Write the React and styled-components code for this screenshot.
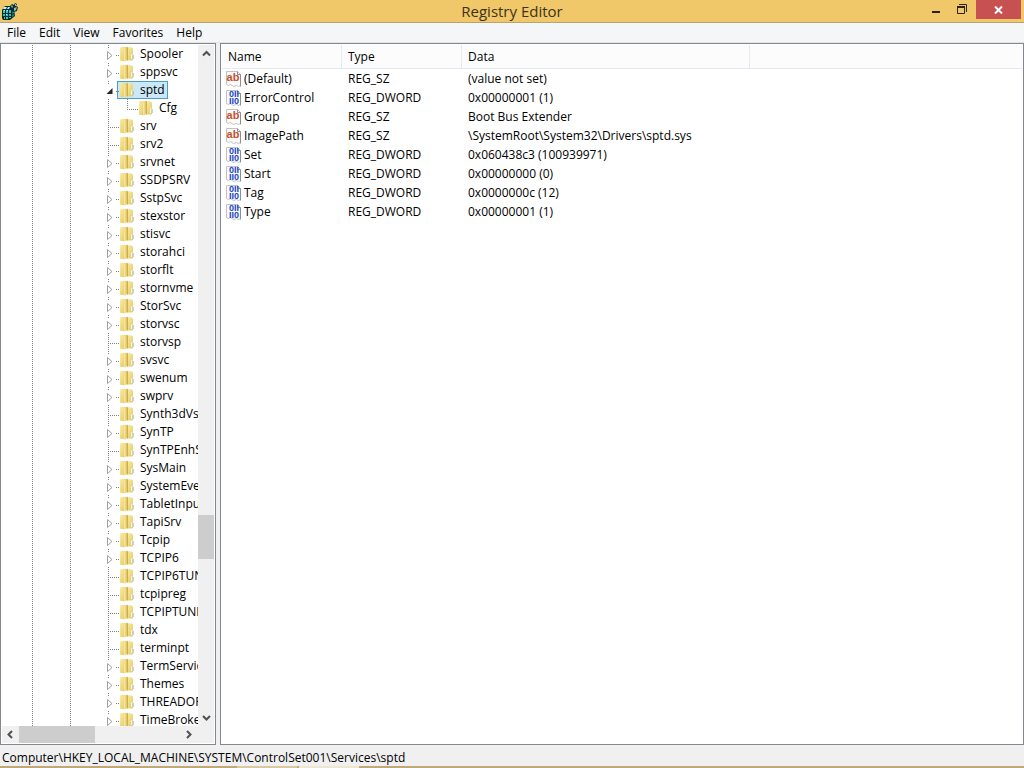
import { useState } from "react";
import styled, { createGlobalStyle, css } from "styled-components";

const MENUS = ["File", "Edit", "View", "Favorites", "Help"];

// kind: "closed" and "open" keys have children, "leaf" keys have none
const KEYS = [
  { name: "Spooler", kind: "closed" },
  { name: "sppsvc", kind: "closed" },
  { name: "sptd", kind: "open" },
  { name: "Cfg", kind: "last", nested: true },
  { name: "srv", kind: "leaf" },
  { name: "srv2", kind: "leaf" },
  { name: "srvnet", kind: "closed" },
  { name: "SSDPSRV", kind: "closed" },
  { name: "SstpSvc", kind: "closed" },
  { name: "stexstor", kind: "closed" },
  { name: "stisvc", kind: "closed" },
  { name: "storahci", kind: "closed" },
  { name: "storflt", kind: "closed" },
  { name: "stornvme", kind: "closed" },
  { name: "StorSvc", kind: "closed" },
  { name: "storvsc", kind: "closed" },
  { name: "storvsp", kind: "leaf" },
  { name: "svsvc", kind: "closed" },
  { name: "swenum", kind: "closed" },
  { name: "swprv", kind: "closed" },
  { name: "Synth3dVsc", kind: "leaf" },
  { name: "SynTP", kind: "closed" },
  { name: "SynTPEnhService", kind: "leaf" },
  { name: "SysMain", kind: "closed" },
  { name: "SystemEventsBroker", kind: "closed" },
  { name: "TabletInputService", kind: "closed" },
  { name: "TapiSrv", kind: "closed" },
  { name: "Tcpip", kind: "closed" },
  { name: "TCPIP6", kind: "closed" },
  { name: "TCPIP6TUNNEL", kind: "leaf" },
  { name: "tcpipreg", kind: "leaf" },
  { name: "TCPIPTUNNEL", kind: "leaf" },
  { name: "tdx", kind: "leaf" },
  { name: "terminpt", kind: "leaf" },
  { name: "TermService", kind: "closed" },
  { name: "Themes", kind: "closed" },
  { name: "THREADORDER", kind: "closed" },
  { name: "TimeBroker", kind: "closed" },
];

const VALUES = [
  { name: "(Default)", type: "REG_SZ", data: "(value not set)" },
  { name: "ErrorControl", type: "REG_DWORD", data: "0x00000001 (1)" },
  { name: "Group", type: "REG_SZ", data: "Boot Bus Extender" },
  {
    name: "ImagePath",
    type: "REG_SZ",
    data: "\\SystemRoot\\System32\\Drivers\\sptd.sys",
  },
  { name: "Set", type: "REG_DWORD", data: "0x060438c3 (100939971)" },
  { name: "Start", type: "REG_DWORD", data: "0x00000000 (0)" },
  { name: "Tag", type: "REG_DWORD", data: "0x0000000c (12)" },
  { name: "Type", type: "REG_DWORD", data: "0x00000001 (1)" },
];

const ROOT_PATH = "Computer\\HKEY_LOCAL_MACHINE\\SYSTEM\\ControlSet001\\Services\\";

export default function App() {
  const [selected, setSelected] = useState("sptd");

  return (
    <Window>
      <GlobalStyle />
      <TitleBar>
        <TitleSide>
          <RegistryIcon />
        </TitleSide>
        <Title>Registry Editor</Title>
        <WindowControls>
          <ControlButton type="button" aria-label="Minimize">
            <svg width="10" height="12" viewBox="0 0 10 12">
              <path d="M1 8h8v2H1z" fill="#2b2415" />
            </svg>
          </ControlButton>
          <ControlButton type="button" aria-label="Restore">
            <svg width="10" height="12" viewBox="0 0 10 12" fill="none" stroke="#2b2415">
              <path d="M2 1.5h7.5V9" />
              <path d="M.5 4.5h7v6h-7z" />
              <path d="M0 4h8" strokeWidth="2" />
            </svg>
          </ControlButton>
          <CloseButton type="button" aria-label="Close">
            <svg width="9" height="8" viewBox="0 0 9 8">
              <path d="M1 .5l7 7M8 .5l-7 7" stroke="#fff" strokeWidth="2" />
            </svg>
          </CloseButton>
        </WindowControls>
      </TitleBar>

      <MenuBar>
        {MENUS.map((menu) => (
          <MenuButton type="button" key={menu}>
            {menu}
          </MenuButton>
        ))}
      </MenuBar>

      <Panes>
        <TreePane>
          <TreeBody>
            <TreeList>
              {KEYS.map((item) => (
                <TreeRow key={item.name}>
                  <Guide />
                  <Guide />
                  {item.nested && <Guide $narrow />}
                  <Branch kind={item.kind} name={item.name} />
                  <KeyButton
                    type="button"
                    $selected={item.name === selected}
                    onClick={() => setSelected(item.name)}
                  >
                    <FolderIcon />
                    {item.name}
                  </KeyButton>
                </TreeRow>
              ))}
            </TreeList>
            <VerticalBar>
              <ScrollButton type="button" aria-label="Scroll up">
                <Chevron d="M1 6.500l3.500-3.500L8 6.500" />
              </ScrollButton>
              <Track>
                <Space $grow={453} />
                <Thumb $grow={44} />
                <Space $grow={150} />
              </Track>
              <ScrollButton type="button" aria-label="Scroll down">
                <Chevron d="M1 3l3.500 3.500L8 3" />
              </ScrollButton>
            </VerticalBar>
          </TreeBody>
          <HorizontalBar>
            <ScrollButton type="button" aria-label="Scroll left">
              <Chevron d="M6 1L2.500 4.500L6 8" />
            </ScrollButton>
            <Track $horizontal>
              <Thumb $grow={76} />
              <Space $grow={85} />
            </Track>
            <ScrollButton type="button" aria-label="Scroll right">
              <Chevron d="M3 1l3.500 3.500L3 8" />
            </ScrollButton>
            <Corner />
          </HorizontalBar>
        </TreePane>

        <ListPane>
          <ValueTable>
            <colgroup>
              <NameCol />
              <TypeCol />
              <DataCol />
              <col />
            </colgroup>
            <thead>
              <tr>
                <HeaderCell>Name</HeaderCell>
                <HeaderCell>Type</HeaderCell>
                <HeaderCell>Data</HeaderCell>
                <EmptyHeader />
              </tr>
            </thead>
            <tbody>
              {VALUES.map((value) => (
                <tr key={value.name}>
                  <NameCell>
                    <NameBox>
                      {value.type === "REG_SZ" ? <StringIcon /> : <BinaryIcon />}
                      {value.name}
                    </NameBox>
                  </NameCell>
                  <Cell>{value.type}</Cell>
                  <Cell>{value.data}</Cell>
                  <Cell />
                </tr>
              ))}
            </tbody>
          </ValueTable>
        </ListPane>
      </Panes>

      <StatusBar>
        {ROOT_PATH}
        {selected}
      </StatusBar>
      <TaskbarEdge>
        <TaskbarTab />
        <TaskbarTab $active />
      </TaskbarEdge>

      <Gradients />
    </Window>
  );
}

function Branch({ kind, name }) {
  if (kind === "leaf" || kind === "last") {
    return (
      <BranchBox>
        <BranchSvg stroke="#808080" strokeDasharray="1 1">
          <path d={kind === "leaf" ? "M1.500 0v18" : "M1.500 0v10"} />
          <path d="M1 10.500h12" />
        </BranchSvg>
      </BranchBox>
    );
  }

  return (
    <BranchBox>
      <ToggleButton
        type="button"
        aria-label={`${kind === "open" ? "Collapse" : "Expand"} ${name}`}
      >
        <BranchSvg>
          <path d="M1.500 0v4M9 10.500h4" stroke="#808080" strokeDasharray="1 1" />
          {kind === "open" ? (
            <path d="M5.500 7v6h-6z" fill="#262626" />
          ) : (
            <path d="M.5 6.500v8l4.500-4z" fill="#fff" stroke="#a0a0a0" />
          )}
        </BranchSvg>
      </ToggleButton>
    </BranchBox>
  );
}

function Chevron({ d }) {
  return (
    <svg width="9" height="9" viewBox="0 0 9 9" fill="none">
      <path d={d} stroke="#505050" strokeWidth="2" />
    </svg>
  );
}

// shared by all the folder icons of the tree
function Gradients() {
  return (
    <svg width="0" height="0" aria-hidden="true">
      <defs>
        <linearGradient id="cover" x1="0" y1="0" x2="1" y2="1">
          <stop offset="0" stopColor="#f9eda6" />
          <stop offset="1" stopColor="#e3c75c" />
        </linearGradient>
        <linearGradient id="flap" x1="0" y1="0" x2="1" y2="0">
          <stop offset="0" stopColor="#f8eeb2" />
          <stop offset="1" stopColor="#dcc060" />
        </linearGradient>
      </defs>
    </svg>
  );
}

function FolderIcon() {
  return (
    <svg width="14" height="16" viewBox="0 0 14 16">
      <path d="M0 1.500L1 1h5v14H1l-1-.5z" fill="url(#cover)" />
      <path d="M7 1l5 .5 1 1V14l-1 .5H7z" fill="url(#cover)" />
      <path d="M4 2.500L7 .5V14l-3 2z" fill="url(#flap)" />
      <path d="M7 .5l1 1V14L7 15z" fill="#cfae48" />
      <path d="M11 8.500h2V13h-2z" fill="#fdf8dc" />
      <path d="M12.500 9h1v4h-1z" fill="#8aa7b4" />
    </svg>
  );
}

function RegistryIcon() {
  return (
    <svg width="17" height="17" viewBox="0 0 17 17">
      <path d="M0 7l3-4h5l4 3 1 7-5 4H1l-1-2z" fill="#06292c" />
      <path d="M1 7h2v3H1zM4 7h2v3H4zM7 7h2v3H7zM1 11h2v2H1zM4 11h2v2H4zM7 11h2v2H7zM2 14h1v2H2zM4 14h2v2H4zM7 14h2v1H7z" fill="#2fc4c4" />
      <path d="M2 7h1v1H2zM5 7h1v1H5zM4 11h1v1H4zM2 4h3L4 6H1zM6 4h2L7 6H5z" fill="#b8f6f3" />
      <path d="M10 9l2-1v2l-2 1zM10 12l2-1v2l-2 1z" fill="#128384" />
      <path d="M8 3l2-2 2 1 1-2 2 1-1 2 2 1-1 4-3 1-3-3z" fill="#112a2c" />
      <path d="M9 3l1-1 1 2-1 1zM13 1h1v2h-1zM12 5l3-1-1 3-2 1z" fill="#7fc9bb" />
    </svg>
  );
}

function Page() {
  return (
    <>
      <path d="M.5.5h11l3 3v11l-2 1-2-1-3 1-3-2-2 1-2-1z" fill="#fafafa" stroke="#c2c2c2" />
      <path d="M11.500.5v3h3v12" fill="none" stroke="#8e8e8e" />
    </>
  );
}

function StringIcon() {
  return (
    <svg width="16" height="16" viewBox="0 0 16 16" aria-hidden="true">
      <Page />
      <IconText x="7" y="10" $size={11} $color="#c8502d">
        ab
      </IconText>
    </svg>
  );
}

function BinaryIcon() {
  return (
    <svg width="16" height="16" viewBox="0 0 16 16" aria-hidden="true">
      <Page />
      <IconText x="8" y="7" $size={9} $color="#2446c8">
        0II
      </IconText>
      <IconText x="8" y="14" $size={9} $color="#2446c8">
        II0
      </IconText>
    </svg>
  );
}

const GlobalStyle = createGlobalStyle`
  * {
    box-sizing: border-box;
  }

  body {
    margin: 0;
    overflow: hidden;
    font-family: "Open Sans", "Noto Sans", sans-serif;
    font-size: 12px;
    color: #000;
  }

  button {
    margin: 0;
    padding: 0;
    border: 0;
    background: none;
    font: inherit;
    color: inherit;
  }

  svg {
    display: block;
    flex: none;
  }
`;

const Window = styled.div`
  display: flex;
  flex-direction: column;
  height: 100vh;
  background: #f0f0f0;
`;

const TitleBar = styled.header`
  display: grid;
  grid-template-columns: 1fr auto 1fr;
  height: 23px;
  background: #f0c869;
  border-bottom: 1px solid #b8a376;
`;

const TitleSide = styled.div`
  padding: 3px 2px;
`;

const Title = styled.h1`
  margin: 0;
  font-size: 15px;
  font-weight: 400;
  line-height: 23px;
  color: #3c321a;
`;

const WindowControls = styled.div`
  display: flex;
  justify-content: flex-end;
  padding-right: 3px;
`;

const ControlButton = styled.button`
  display: flex;
  justify-content: center;
  width: 26px;
  height: 19px;
  padding-top: 3px;
`;

const CloseButton = styled(ControlButton)`
  width: 45px;
  margin-left: 1px;
  padding-top: 6px;
  background: #c75050;
`;

const MenuBar = styled.nav`
  display: flex;
  height: 20px;
  padding-left: 1px;
  gap: 1px;
  background: #f5f6f7;
  border-bottom: 1px solid #e4e4e6;
`;

const MenuButton = styled.button`
  padding: 0 6px;
  line-height: 19px;
`;

const Panes = styled.main`
  display: flex;
  flex: 1;
  gap: 4px;
  min-height: 0;
`;

const pane = css`
  border: 1px solid #828790;
  background: #fff;
  overflow: hidden;
`;

const TreePane = styled.section`
  ${pane}
  display: flex;
  flex-direction: column;
  flex: none;
  width: 216px;
  padding: 1px;
`;

const TreeBody = styled.div`
  display: flex;
  flex: 1;
  min-height: 0;
`;

const TreeList = styled.ul`
  flex: 1;
  min-width: 0;
  margin: 0;
  padding: 0 0 0 29px;
  list-style: none;
  overflow: hidden;
`;

const TreeRow = styled.li`
  display: flex;
  height: 18px;
  white-space: nowrap;
`;

const Guide = styled.span`
  flex: none;
  width: ${({ $narrow }) => ($narrow ? 19 : 38)}px;
  background: repeating-linear-gradient(#808080 0 1px, transparent 1px 2px) 1px 0 / 1px 100% no-repeat;
`;

const BranchBox = styled.span`
  position: relative;
  z-index: 1;
  flex: none;
  width: 10px;
`;

const BranchSvg = styled.svg.attrs({ width: 13, height: 18, viewBox: "0 0 13 18" })`
  overflow: visible;
  pointer-events: none;
`;

const ToggleButton = styled.button`
  display: block;
  width: 10px;
  height: 18px;
`;

const KeyButton = styled.button`
  display: flex;
  flex: none;
  align-items: flex-start;
  gap: 6px;
  height: 18px;
  padding: 0 2px;
  border: 1px solid ${({ $selected }) => ($selected ? "#4a9fc8" : "transparent")};
  background: ${({ $selected }) => ($selected ? "#cbe8f6" : "none")};
  line-height: 16px;
`;

const VerticalBar = styled.div`
  display: flex;
  flex-direction: column;
  align-items: center;
  width: 16px;
  background: #f0f0f0;
`;

const HorizontalBar = styled.div`
  display: flex;
  height: 17px;
  background: #f0f0f0;
`;

const ScrollButton = styled.button`
  display: flex;
  flex: none;
  align-items: center;
  justify-content: center;
  width: 17px;
  height: 17px;
`;

const Corner = styled.div`
  width: 17px;
`;

const Track = styled.div`
  display: flex;
  flex: 1;
  align-self: stretch;
  flex-direction: ${({ $horizontal }) => ($horizontal ? "row" : "column")};
`;

const Space = styled.div`
  flex: ${({ $grow }) => $grow} 0 0;
`;

const Thumb = styled(Space)`
  background: #cdcdcd;
`;

const ListPane = styled.section`
  ${pane}
  flex: 1;
  padding: 1px;
`;

const ValueTable = styled.table`
  width: 100%;
  border-collapse: separate;
  border-spacing: 0;
  table-layout: fixed;
`;

const NameCol = styled.col`
  width: 120px;
`;

const TypeCol = styled.col`
  width: 120px;
`;

const DataCol = styled.col`
  width: 288px;
`;

const HeaderCell = styled.th`
  height: 24px;
  padding: 0 6px;
  border-right: 1px solid #e5e9f2;
  border-bottom: 1px solid #e5e9f2;
  background: #fcfcfc;
  font-weight: 400;
  text-align: left;
`;

const EmptyHeader = styled.td`
  border-bottom: 1px solid #e5e9f2;
  background: #fcfcfc;
`;

const Cell = styled.td`
  height: 19px;
  padding: 0 6px;
  line-height: 19px;
  white-space: nowrap;
`;

const NameCell = styled(Cell)`
  padding: 0 4px;
`;

const NameBox = styled.div`
  display: flex;
  align-items: center;
  gap: 2px;
`;

const IconText = styled.text`
  font-family: "Liberation Sans", sans-serif;
  font-size: ${({ $size }) => $size}px;
  font-weight: 700;
  text-anchor: middle;
  fill: ${({ $color }) => $color};
`;

const StatusBar = styled.footer`
  height: 21px;
  padding: 0 2px;
  line-height: 25px;
`;

const TaskbarEdge = styled.div`
  display: flex;
  gap: 2px;
  height: 2px;
  padding-left: 237px;
  background: #c0a878;
`;

const TaskbarTab = styled.div`
  width: 60px;
  background: ${({ $active }) => ($active ? "#efe6d2" : "#d9c8a2")};
`;
